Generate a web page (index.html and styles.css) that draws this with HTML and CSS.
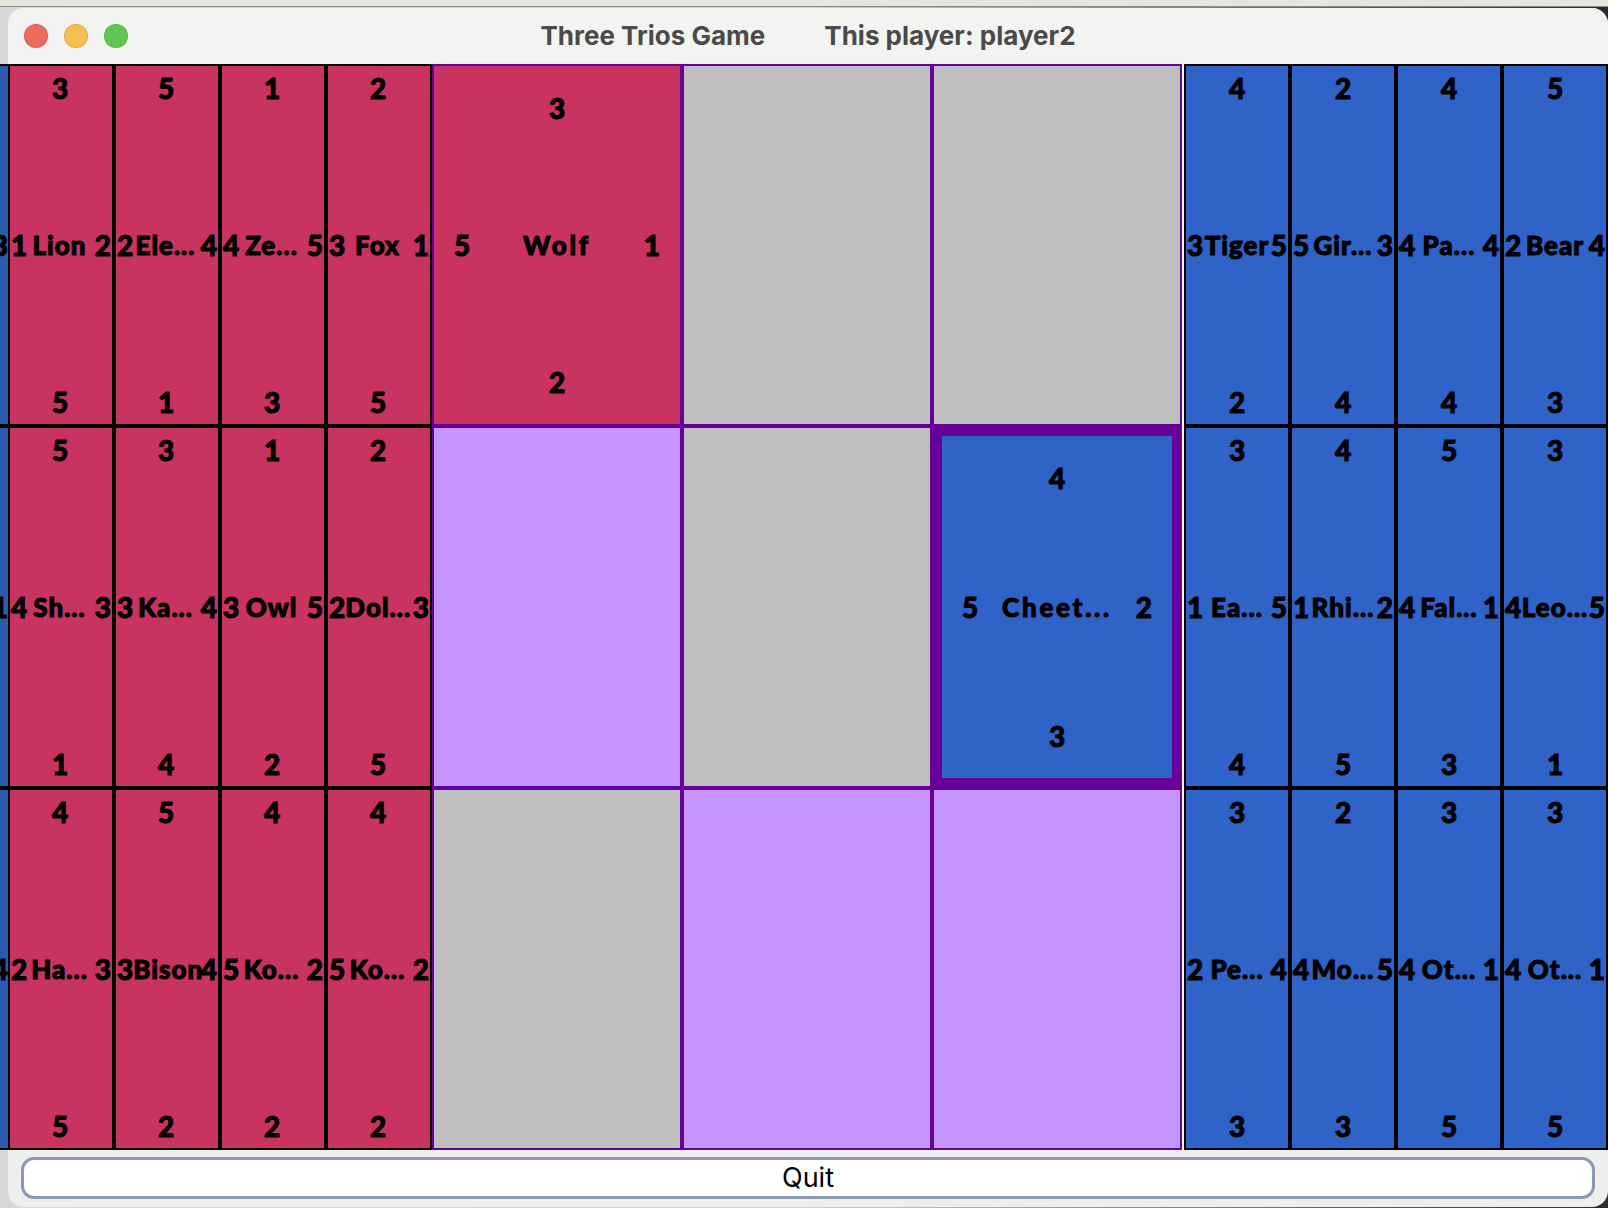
FILE: index.html
```html
<!DOCTYPE html>
<html lang="en">
  <head>
    <meta charset="UTF-8" />
    <meta name="viewport" content="width=device-width, initial-scale=1.0" />
    <title>Three Trios Game</title>
    <link rel="stylesheet" href="styles.css">
  </head>
  <body>
    <div class="desktop-strip"></div>
    <div class="window">
      <div class="title-bar">
        <div class="lights">
          <span class="light close"></span>
          <span class="light minimize"></span>
          <span class="light zoom"></span>
        </div>
        <span>Three Trios Game</span>
        <span>This player: player2</span>
      </div>

      <div class="game">
        <div class="stub">
          <div class="stub-cell"><span class="num">3</span></div>
          <div class="stub-cell"><span class="num">1</span></div>
          <div class="stub-cell"><span class="num">4</span></div>
        </div>

        <div class="hand left-hand">
          <div class="card red"><span class="num">3</span><div class="mid"><span class="num">1</span><span class="name">Lion</span><span class="num">2</span></div><span class="num">5</span></div>
          <div class="card red"><span class="num">5</span><div class="mid"><span class="num">2</span><span class="name">Ele...</span><span class="num">4</span></div><span class="num">1</span></div>
          <div class="card red"><span class="num">1</span><div class="mid"><span class="num">4</span><span class="name">Ze...</span><span class="num">5</span></div><span class="num">3</span></div>
          <div class="card red"><span class="num">2</span><div class="mid"><span class="num">3</span><span class="name">Fox</span><span class="num">1</span></div><span class="num">5</span></div>

          <div class="card red"><span class="num">5</span><div class="mid"><span class="num">4</span><span class="name">Sh...</span><span class="num">3</span></div><span class="num">1</span></div>
          <div class="card red"><span class="num">3</span><div class="mid"><span class="num">3</span><span class="name">Ka...</span><span class="num">4</span></div><span class="num">4</span></div>
          <div class="card red"><span class="num">1</span><div class="mid"><span class="num">3</span><span class="name">Owl</span><span class="num">5</span></div><span class="num">2</span></div>
          <div class="card red"><span class="num">2</span><div class="mid"><span class="num">2</span><span class="name">Dol...</span><span class="num">3</span></div><span class="num">5</span></div>

          <div class="card red"><span class="num">4</span><div class="mid"><span class="num">2</span><span class="name">Ha...</span><span class="num">3</span></div><span class="num">5</span></div>
          <div class="card red"><span class="num">5</span><div class="mid"><span class="num">3</span><span class="name">Bison</span><span class="num">4</span></div><span class="num">2</span></div>
          <div class="card red"><span class="num">4</span><div class="mid"><span class="num">5</span><span class="name">Ko...</span><span class="num">2</span></div><span class="num">2</span></div>
          <div class="card red"><span class="num">4</span><div class="mid"><span class="num">5</span><span class="name">Ko...</span><span class="num">2</span></div><span class="num">2</span></div>
        </div>

        <div class="board">
          <div class="card cell red"><span class="num">3</span><div class="mid"><span class="num">5</span><span class="name">Wolf</span><span class="num">1</span></div><span class="num">2</span></div>
          <div class="cell hole"></div>
          <div class="cell hole"></div>

          <div class="cell empty"></div>
          <div class="cell hole"></div>
          <div class="card cell blue selected"><span class="num">4</span><div class="mid"><span class="num">5</span><span class="name">Cheet...</span><span class="num">2</span></div><span class="num">3</span></div>

          <div class="cell hole"></div>
          <div class="cell empty"></div>
          <div class="cell empty"></div>
        </div>

        <div class="hand right-hand">
          <div class="card blue"><span class="num">4</span><div class="mid"><span class="num">3</span><span class="name">Tiger</span><span class="num">5</span></div><span class="num">2</span></div>
          <div class="card blue"><span class="num">2</span><div class="mid"><span class="num">5</span><span class="name">Gir...</span><span class="num">3</span></div><span class="num">4</span></div>
          <div class="card blue"><span class="num">4</span><div class="mid"><span class="num">4</span><span class="name">Pa...</span><span class="num">4</span></div><span class="num">4</span></div>
          <div class="card blue"><span class="num">5</span><div class="mid"><span class="num">2</span><span class="name">Bear</span><span class="num">4</span></div><span class="num">3</span></div>

          <div class="card blue"><span class="num">3</span><div class="mid"><span class="num">1</span><span class="name">Ea...</span><span class="num">5</span></div><span class="num">4</span></div>
          <div class="card blue"><span class="num">4</span><div class="mid"><span class="num">1</span><span class="name">Rhi...</span><span class="num">2</span></div><span class="num">5</span></div>
          <div class="card blue"><span class="num">5</span><div class="mid"><span class="num">4</span><span class="name">Fal...</span><span class="num">1</span></div><span class="num">3</span></div>
          <div class="card blue"><span class="num">3</span><div class="mid"><span class="num">4</span><span class="name">Leo...</span><span class="num">5</span></div><span class="num">1</span></div>

          <div class="card blue"><span class="num">3</span><div class="mid"><span class="num">2</span><span class="name">Pe...</span><span class="num">4</span></div><span class="num">3</span></div>
          <div class="card blue"><span class="num">2</span><div class="mid"><span class="num">4</span><span class="name">Mo...</span><span class="num">5</span></div><span class="num">3</span></div>
          <div class="card blue"><span class="num">3</span><div class="mid"><span class="num">4</span><span class="name">Ot...</span><span class="num">1</span></div><span class="num">5</span></div>
          <div class="card blue"><span class="num">3</span><div class="mid"><span class="num">4</span><span class="name">Ot...</span><span class="num">1</span></div><span class="num">5</span></div>
        </div>
      </div>

      <div class="footer">
        <button class="quit" type="button">Quit</button>
      </div>
    </div>
  </body>
</html>
```

FILE: styles.css
```css
html,
body {
  margin: 0;
  height: 1208px;
  overflow: hidden;
}

body {
  font-family: Inter, "Liberation Sans", sans-serif;
  background: linear-gradient(to right, #d8d8d8, #d0d0d0 50%, #2c2c2c);
}

.desktop-strip {
  height: 6px;
  background-color: #e8e5de;
  border-bottom: 1px solid #8b8a86;
}

.window {
  margin: 1px 0 0 8px;
  width: 1600px;
  height: 1199px;
  background-color: #eeeeee;
  border-radius: 16px;
}

.title-bar {
  position: relative;
  height: 56px;
  display: flex;
  align-items: center;
  justify-content: center;
  gap: 59px;
  padding-bottom: 2px;
  box-sizing: border-box;
  background-color: #f3f3f1;
  border-radius: 16px 16px 0 0;
  color: #4a4a4a;
  font-size: 26px;
  font-weight: 700;
}

.lights {
  position: absolute;
  left: 16px;
  top: 16px;
  display: flex;
  gap: 16px;
}

.light {
  width: 24px;
  height: 24px;
  box-sizing: border-box;
  border-radius: 50%;
  border: 1px solid rgba(0, 0, 0, 0.1);
}

.close {
  background-color: #ee6a5f;
}

.minimize {
  background-color: #f6bf50;
}

.zoom {
  background-color: #61c554;
}

.game {
  display: flex;
  margin-left: -8px;
  width: 1608px;
  height: 1086px;
  background-color: #ffffff;
}

.stub {
  width: 8px;
  flex: none;
}

.stub-cell {
  height: 362px;
  box-sizing: border-box;
  display: flex;
  align-items: center;
  justify-content: flex-end;
  overflow: hidden;
  background-color: #2a5bb0;
  border-top: 2px solid #000000;
  border-bottom: 2px solid #000000;
}

.hand {
  flex: none;
  display: grid;
  grid-template-columns: repeat(4, 106px);
  grid-template-rows: repeat(3, 362px);
}

.right-hand {
  margin-left: 2px;
}

.left-hand .card > .num {
  margin-right: 2px;
}

.left-hand .name {
  padding-right: 3px;
}

.board {
  flex: none;
  display: grid;
  grid-template-columns: repeat(3, 250px);
  grid-template-rows: repeat(3, 362px);
}

.card {
  box-sizing: border-box;
  display: flex;
  flex-direction: column;
  align-items: center;
  justify-content: space-between;
  border: 2px solid #000000;
  padding: 7px 0;
}

.red {
  background-color: #c83362;
}

.blue {
  background-color: #3063c8;
}

.num,
.name {
  color: #000000;
  font-family: Lato, "DejaVu Sans", sans-serif;
  font-weight: 900;
  white-space: nowrap;
  -webkit-text-stroke: 1px #000000;
}

.num {
  font-size: 28px;
  line-height: 30px;
}

.name {
  flex: 1;
  min-width: 0;
  text-align: center;
  font-size: 26px;
  line-height: 30px;
  letter-spacing: 1px;
}

.mid {
  width: 100%;
  display: flex;
  align-items: center;
  padding: 0 1px;
  box-sizing: border-box;
}

.cell {
  box-sizing: border-box;
  border: 2px solid #660099;
}

.card.cell {
  padding: 27px 19px;
}

.card.cell .name {
  letter-spacing: 2.75px;
}

.hole {
  background-color: #bfbfbf;
}

.empty {
  background-color: #c695fe;
}

.card.selected {
  border-width: 10px;
}

.footer {
  padding: 7px 13px;
}

.quit {
  display: block;
  width: 100%;
  height: 42px;
  padding: 0 0 2px;
  background-color: #ffffff;
  border: 3px solid #8a9ab2;
  border-radius: 13px;
  color: #000000;
  font-family: Inter, "Liberation Sans", sans-serif;
  font-size: 27px;
}
```
